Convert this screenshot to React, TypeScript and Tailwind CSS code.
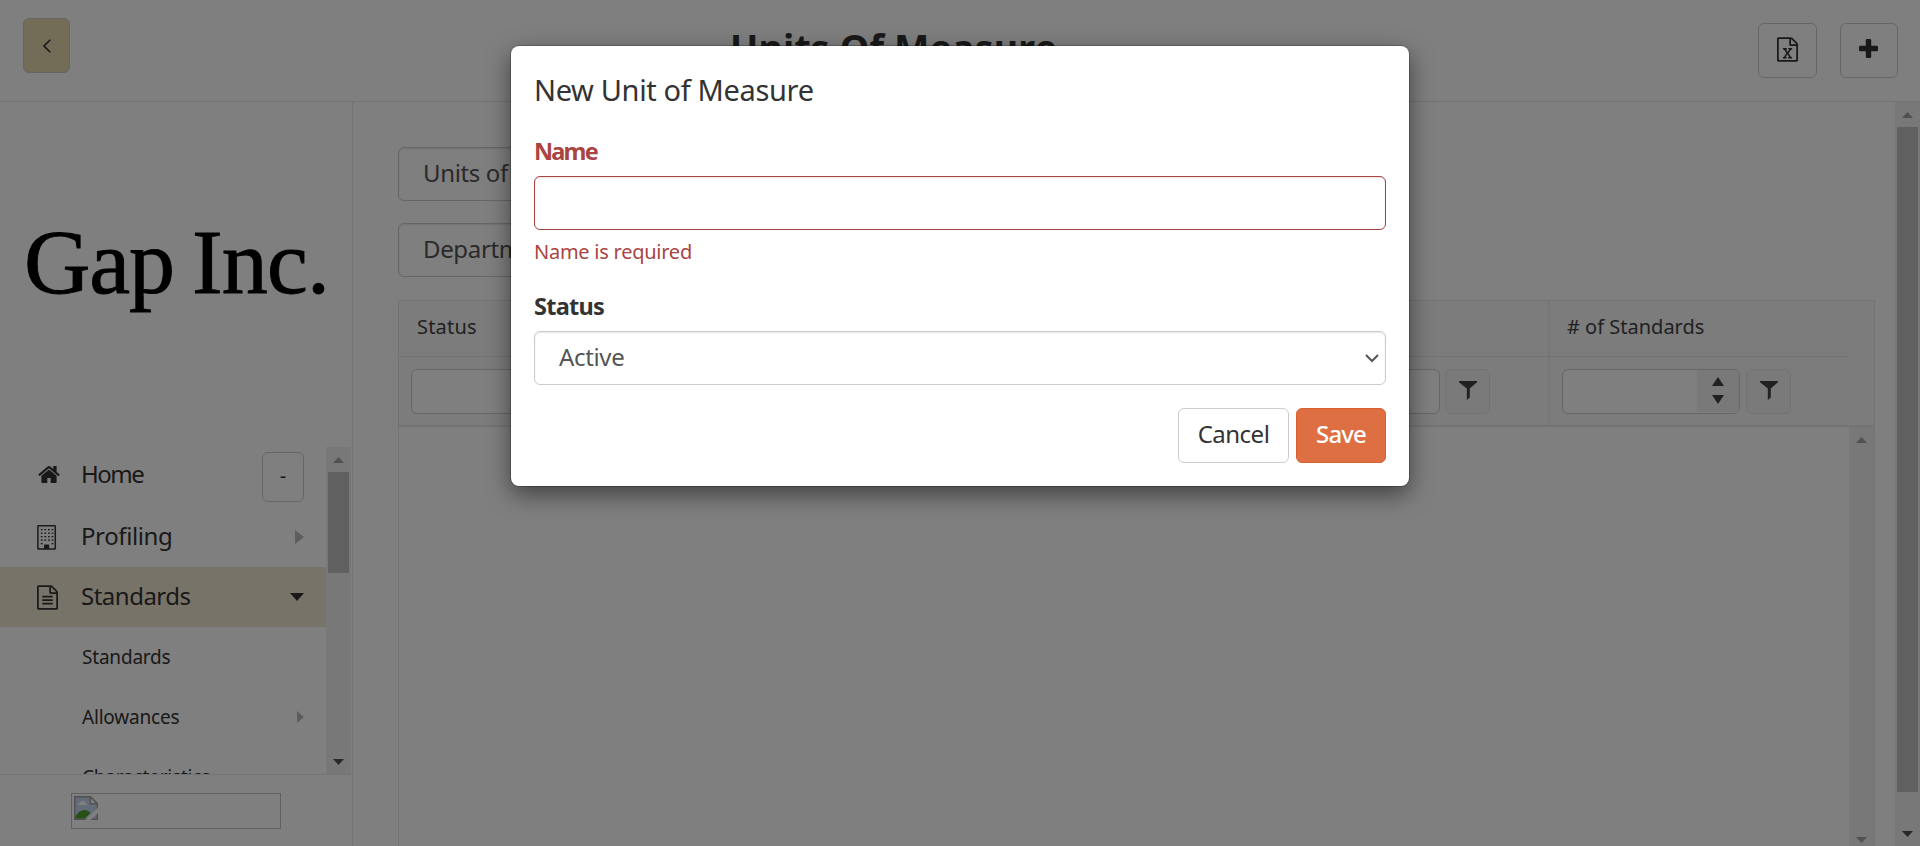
import React from "react";

const FILE_PATH =
  "M1596 380q28 28 48 76t20 88v1152q0 40-28 68t-68 28h-1344q-40 0-68-28t-28-68v-1600q0-40 28-68t68-28h896q40 0 88 20t76 48zm-444-244v376h376q-10-29-22-41l-313-313q-12-12-41-22zm384 1528v-1024h-416q-40 0-68-28t-28-68v-416h-768v1536h1280z";

function FileTextIcon() {
  return (
    <svg viewBox="128 0 1536 1792" className="h-[25px] w-[21px]" fill="currentColor">
      <path d={FILE_PATH} />
      <path d="M512 800q0-14 9-23t23-9h704q14 0 23 9t9 23v64q0 14-9 23t-23 9h-704q-14 0-23-9t-9-23v-64zm736 224q14 0 23 9t9 23v64q0 14-9 23t-23 9h-704q-14 0-23-9t-9-23v-64q0-14 9-23t23-9h704zm0 256q14 0 23 9t9 23v64q0 14-9 23t-23 9h-704q-14 0-23-9t-9-23v-64q0-14 9-23t23-9h704z" />
    </svg>
  );
}

function FileExcelIcon() {
  return (
    <svg viewBox="128 0 1536 1792" className="h-[25px] w-[21px]" fill="currentColor">
      <path d={FILE_PATH} />
      <path
        transform="translate(128 -72)"
        d="M429 1514v106h281v-106h-75l103-161q5-7 10-16.5t7.5-13.5 3.5-4h2q1 4 5 10 2 4 4.5 7.5t6 8 6.5 8.5l107 161h-76v106h291v-106h-68l-192-273 195-282h67v-107h-279v107h74l-103 159q-4 7-10 16.5t-9 13.5l-2 3h-2q-1-4-5-10-6-11-17-23l-106-159h76v-107h-290v107h68l189 272-194 283h-68z"
      />
    </svg>
  );
}

function HomeIcon() {
  return (
    <svg viewBox="64 253 1664 1283" className="h-[17px] w-[22px]" fill="currentColor">
      <path d="M1472 992v480q0 26-19 45t-45 19h-384v-384h-256v384h-384q-26 0-45-19t-19-45v-480q0-1 .5-3t.5-3l575-474 575 474q1 2 1 6zm223-69l-62 74q-8 9-21 11h-3q-13 0-21-7l-692-577-692 577q-12 8-24 7-13-2-21-11l-62-74q-8-10-7-23.5t11-21.5l719-599q32-26 76-26t76 26l244 204v-195q0-14 9-23t23-9h192q14 0 23 9t9 23v408l219 182q10 8 11 21.5t-7 23.5z" />
    </svg>
  );
}

function BuildingIcon() {
  const rows = [4, 7.5, 11, 14.5, 18];
  const cols = [4, 7.6, 11.2, 14.8];
  return (
    <svg viewBox="0 0 20 25" className="h-[25px] w-5" fill="currentColor">
      <rect x="0.9" y="0.8" width="17.4" height="23.2" rx="0.6" fill="none" stroke="currentColor" strokeWidth="1.5" />
      {rows.map((y) =>
        cols.map((x) =>
          y === 18 && x > 5 && x < 14 ? null : (
            <rect key={`${x}-${y}`} x={x - 0.2} y={y} width="1.8" height="1.3" />
          )
        )
      )}
      <path d="M7 24v-4q0-.6.6-.6h4q.6 0 .6.6v4z" />
    </svg>
  );
}

function FilterIcon() {
  return (
    <svg viewBox="0 0 18 19" className="h-[19px] w-[18px]" fill="currentColor">
      <path d="M0 0h18v1.200l-7.200 6.400V16.500l-3 2.500V7.600L0 1.200z" />
    </svg>
  );
}

function Triangle({ dir, className }: { dir: "up" | "down" | "right"; className: string }) {
  const d = dir === "up" ? "M0 10 5 0l5 10z" : dir === "down" ? "M0 0h10L5 10z" : "M0 0v10l10-5z";
  return (
    <svg viewBox="0 0 10 10" preserveAspectRatio="none" className={className} fill="currentColor">
      <path d={d} />
    </svg>
  );
}

function ScrollBar({ className, thumb, disabled }: { className: string; thumb?: string; disabled?: boolean }) {
  return (
    <div className={`flex w-[25px] shrink-0 flex-col items-center justify-between bg-[#f1f1f1] ${className}`}>
      <div className="flex w-full flex-col items-center">
        <div className="flex h-[25px] items-center pt-px">
          <Triangle dir="up" className="h-[6px] w-[11px] text-[#a3a3a3]" />
        </div>
        {thumb && <div className={`w-[21px] bg-[#c1c1c1] ${thumb}`} />}
      </div>
      <div className="flex h-[25px] items-center">
        <Triangle dir="down" className={disabled ? "h-[6px] w-[11px] text-[#a3a3a3]" : "h-[6px] w-[11px] text-[#505050]"} />
      </div>
    </div>
  );
}

function FilterButton() {
  return (
    <div className="flex h-[45px] w-[45px] items-center justify-center rounded-md border border-[#e4e4e4] bg-[#f5f5f5] pb-0.5 text-[#424242]">
      <FilterIcon />
    </div>
  );
}

function Header() {
  return (
    <header className="flex h-[102px] shrink-0 items-start border-b border-[#e7e7e7] pr-[22px] pl-[23px]">
      <div className="mt-[18px] flex h-[55px] w-[47px] items-center justify-center rounded-md border border-[#ccc] bg-[#e6d8ae]">
        <svg viewBox="0 0 8 14" className="h-[14px] w-2" fill="none" stroke="currentColor" strokeWidth="1.6">
          <path d="M7.300.7 1 7l6.300 6.300" />
        </svg>
      </div>
      <h1 className="mt-[23px] ml-[660px] text-[37.500px] leading-[50px] font-bold tracking-[0.150px] whitespace-nowrap">
        Units Of Measure
      </h1>
      <div className="mt-[23px] ml-auto flex gap-[23px]">
        <div className="flex h-[55px] w-[59px] items-center justify-center rounded-md border border-[#ccc] pb-0.5">
          <FileExcelIcon />
        </div>
        <div className="flex h-[55px] w-[58px] items-center justify-center rounded-md border border-[#ccc] pr-px pb-1">
          <svg viewBox="0 0 19 19" className="size-[19px]" fill="currentColor">
            <rect x="0" y="6.800" width="19" height="5.400" rx="1.300" />
            <rect x="6.800" y="0" width="5.400" height="19" rx="1.300" />
          </svg>
        </div>
      </div>
    </header>
  );
}

function Sidebar() {
  return (
    <aside className="flex w-[353px] shrink-0 flex-col border-r border-[#e7e7e7]">
      <div className="h-[345px] shrink-0">
        <svg viewBox="0 0 352 345" className="h-[345px] w-[352px]" fill="#000" stroke="#000" strokeWidth="0.9">
          <text x="24" y="191" fontSize="92" fontFamily="Liberation Serif, serif" textLength="151">
            Gap
          </text>
          <text x="192" y="191" fontSize="92" fontFamily="Liberation Serif, serif" textLength="138">
            Inc.
          </text>
        </svg>
      </div>
      <div className="flex h-[327px] shrink-0 pr-px">
        <nav className="h-[327px] flex-1 overflow-hidden text-[24px]">
          <div className="flex h-[60px] items-start pl-[38px]">
            <div className="mt-[19px] w-[43px]">
              <HomeIcon />
            </div>
            <span className="mt-[9px] leading-9 tracking-[-1.500px]">Home</span>
            <div className="mt-[5px] mr-[22px] ml-auto flex h-[50px] w-[42px] items-center justify-center rounded-md border border-[#ccc] pb-0.5 text-[20px]">
              -
            </div>
          </div>
          <div className="flex h-[60px] items-center pl-[37px]">
            <div className="w-[44px]">
              <BuildingIcon />
            </div>
            <span className="pb-0.5 tracking-[-0.400px]">Profiling</span>
            <Triangle dir="right" className="mr-[22px] ml-auto h-[14px] w-[9px] text-[#bbb]" />
          </div>
          <div className="flex h-[60px] items-center bg-[#f0e7d1] pl-[37px]">
            <div className="w-[44px]">
              <FileTextIcon />
            </div>
            <span className="pb-0.5 tracking-[-0.500px]">Standards</span>
            <Triangle dir="down" className="mr-[22px] ml-auto h-2 w-[14px]" />
          </div>
          <div className="flex h-[60px] items-center pl-[82px] text-[19px] tracking-[-0.200px]">Standards</div>
          <div className="flex h-[60px] items-center pl-[82px] text-[19px] tracking-[-0.200px]">
            Allowances
            <Triangle dir="right" className="mr-[22px] ml-auto h-3 w-[7px] text-[#bbb]" />
          </div>
          <div className="flex h-[60px] items-center pl-[82px] text-[19px] tracking-[-0.200px]">Characteristics</div>
        </nav>
        <ScrollBar className="h-full" thumb="h-[101px]" />
      </div>
      <div className="flex-1 border-t border-[#e7e7e7] pt-[18px] pl-[71px]">
        <div className="h-9 w-[210px] border border-[#c0c0c0] p-0.5">
          <svg viewBox="0 0 24 24" className="size-6">
            <path d="M.7.7h15.600l7 7v15.600H.7z" fill="#c6d6f3" stroke="#a0a0a0" strokeWidth="1.400" />
            <path d="M4 9q0-2 2-2 1-2.600 3.200-2.300Q11 5 11 7q2 0 2 2z" fill="#fff" />
            <path d="M1.400 22.600V20q4-6 9-6 4 0 6 3l-5.500 5.600z" fill="#4fa02c" />
            <path d="M16.300.7v7h7z" fill="#fff" stroke="#a0a0a0" strokeWidth="1.400" />
            <path d="M24 11.500 11 24h5.500L24 17z" fill="#fff" />
          </svg>
        </div>
      </div>
    </aside>
  );
}

function Grid() {
  return (
    <div className="mt-[23px] -mb-[6px] flex flex-1 flex-col border border-b-0 border-[#e7e7e7]">
      <div className="flex h-[126px] shrink-0 border-b-2 border-[#e7e7e7] bg-[#f9f9f9] text-[20px] text-[#424242]">
        <div className="w-[1151px] shrink-0 border-r-2 border-[#ececec]">
          <div className="flex h-[56px] items-center border-b border-[#e7e7e7] pb-[3px] pl-[18px] tracking-[0.200px]">
            Status
          </div>
          <div className="flex h-[68px] items-center justify-between pr-[58px] pl-3">
            <div className="h-[45px] w-[1029px] rounded-md border border-[#ccc] bg-white" />
            <FilterButton />
          </div>
        </div>
        <div className="w-[298px]">
          <div className="flex h-[56px] items-center border-b border-[#e7e7e7] pb-[3px] pl-[17px]">
            # of Standards
          </div>
          <div className="flex h-[68px] items-center gap-1.5 pl-3">
            <div className="flex h-[45px] w-[178px] justify-end overflow-hidden rounded-md border border-[#ccc] bg-white">
              <div className="flex h-[42px] w-[42px] flex-col items-center justify-center gap-[9px] bg-[#f2f2f2]">
                <Triangle dir="up" className="h-[9px] w-3" />
                <Triangle dir="down" className="h-[9px] w-3" />
              </div>
            </div>
            <FilterButton />
          </div>
        </div>
      </div>
      <div className="flex flex-1 justify-end">
        <ScrollBar className="h-full" disabled />
      </div>
    </div>
  );
}

function Select({ children }: { children: React.ReactNode }) {
  return (
    <div className="flex h-[54px] items-center justify-between rounded-md border border-[#ccc] bg-white pr-[6px] pl-6 text-[24px] text-[#555] shadow-[inset_0_1px_2px_rgba(0,0,0,0.100)]">
      <span className="pb-0.5 tracking-[-0.350px]">{children}</span>
      <svg viewBox="0 0 14 9" className="mt-px h-[9px] w-[14px]" fill="none" stroke="currentColor" strokeWidth="2">
        <path d="M1 1l6 6 6-6" />
      </svg>
    </div>
  );
}

function Modal() {
  return (
    <div
      role="dialog"
      className="h-[440px] w-[898px] rounded-lg bg-white px-[23px] shadow-[0_0_0_1px_rgba(0,0,0,0.200),0_8px_23px_rgba(0,0,0,0.500)]"
    >
      <h2 className="pt-[23px] text-[29px] leading-[42px] tracking-[-0.350px]">New Unit of Measure</h2>
      <div className="mt-[24px] text-[23.500px] leading-8 font-bold tracking-[-1.800px] text-[#a94442]">Name</div>
      <div className="mt-[9px] h-[54px] rounded-md border border-[#a94442] shadow-[inset_0_1px_2px_rgba(0,0,0,0.100)]" />
      <div className="mt-2 text-[20px] leading-7 tracking-[-0.250px] text-[#a94442]">Name is required</div>
      <div className="mt-[24px] mb-[9px] text-[23.500px] leading-8 font-bold tracking-[-0.750px]">Status</div>
      <Select>Active</Select>
      <div className="mt-[23px] flex justify-end gap-[7px] text-[24px]">
        <button className="h-[55px] w-[111px] rounded-md border border-[#ccc] pb-[3px] tracking-[-0.500px]">
          Cancel
        </button>
        <button className="h-[55px] w-[90px] rounded-md border border-[#d9602f] bg-[#dd6f43] pb-[3px] font-medium tracking-[-0.900px] text-white">
          Save
        </button>
      </div>
    </div>
  );
}

export default function App() {
  return (
    <div className="relative h-[846px] w-[1920px] overflow-hidden bg-white font-['Noto_Sans',sans-serif] text-[#333]">
      <div className="flex h-full flex-col">
        <Header />
        <div className="flex min-h-0 flex-1">
          <Sidebar />
          <main className="flex flex-1 flex-col pt-[45px] pr-5 pl-[45px]">
            <div className="w-[700px]">
              <Select>Units of Measure</Select>
              <div className="h-[22px]" />
              <Select>Department</Select>
            </div>
            <Grid />
          </main>
          <ScrollBar className="h-full" thumb="h-[665px]" />
        </div>
      </div>
      <div className="absolute inset-0 flex items-start justify-center bg-black/50 pt-[46px]">
        <Modal />
      </div>
    </div>
  );
}
